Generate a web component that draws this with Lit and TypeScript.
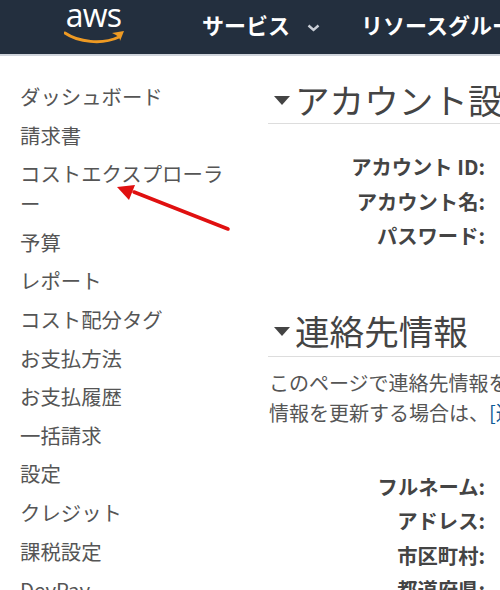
import { LitElement, html, css } from "lit";
import { customElement } from "lit/decorators.js";

const NAV = ["ダッシュボード","請求書","コストエクスプローラー","予算","レポート","コスト配分タグ","お支払方法","お支払履歴","一括請求","設定","クレジット","課税設定","DevPay"];

@customElement("app-root")
export class AppRoot extends LitElement {
  static styles = css`
    :host { display:block; width:500px; height:590px; overflow:hidden; position:relative; background:#fff;
      font-family:"Noto Sans CJK JP","Liberation Sans",sans-serif; color:#444; }
    .top { height:54px; background:#232f3e; border-bottom:2px solid #cfd4db; display:flex; align-items:flex-start; color:#fff; }
    .logo { width:59px; margin-left:64px; height:54px; position:relative; flex:none; display:flex; flex-direction:column; align-items:center; }
    .aws { font:400 32px/32px "Open Sans","Liberation Sans",sans-serif; letter-spacing:-.8px; margin-top:-1px; color:#fff; }
    .logo svg { position:absolute; left:0; top:29px; }
    .menu { font-size:22px; font-weight:700; white-space:nowrap; line-height:49px; }
    .m1 { margin-left:79px; }
    .chev { margin:24px 0 0 17px; flex:none; }
    .m2 { margin-left:41px; }
    .body { display:flex; }
    .side { width:248px; padding:25px 0 0 20px; flex:none; }
    .side div { width:210px; font-size:20.4px; line-height:30px; margin-bottom:8.6px; color:#555; word-break:break-all; }
    .main { flex:none; width:300px; margin-left:-36px; padding-left:36px; }
    .sec { width:232px; }
    h2 { margin:0; font-weight:400; font-size:34.6px; line-height:50px; white-space:nowrap; display:flex; align-items:center; border-bottom:1px solid #ddd; height:68px; box-sizing:border-box; padding-top:18px; color:#444; }
    .tri { width:0; height:0; border:8px solid transparent; border-top:9px solid #444; border-bottom:0; margin:3px 5px 0 6px; flex:none; }
    .rows { margin-top:25px; }
    .row { width:217px; text-align:right; font-weight:700; font-size:20.3px; line-height:34.5px; color:#444; white-space:nowrap; }
    h2.second { margin-top:34px; height:70px; }
    p { margin:11px 0 0 1px; font-size:20px; line-height:30px; white-space:nowrap; color:#555; }
    p a { color:#0b5a96; }
    .rows2 { margin-top:41px; }
    .arrow { position:absolute; left:110px; top:175px; }
  `;
  render() {
    return html`
      <div class="top">
        <div class="logo">
          <span class="aws">aws</span>
          <svg width="62" height="18" viewBox="0 0 62 18"><path d="M1 4 C14 13 38 16 55 8" fill="none" stroke="#ee9a23" stroke-width="3" stroke-linecap="round"/><path d="M48 4 L60 2 L56 12 Q56 7 48 4Z" fill="#ee9a23"/></svg>
        </div>
        <span class="menu m1">サービス</span>
        <svg class="chev" width="13" height="8" viewBox="0 0 13 8"><path d="M1.5 1.5 L6.5 6 L11.500 1.500" fill="none" stroke="#c9ced6" stroke-width="2.400"/></svg>
        <span class="menu m2">リソースグループ</span>
      </div>
      <div class="body">
        <nav class="side">${NAV.map((n) => html`<div>${n}</div>`)}</nav>
        <main class="main">
          <div class="sec">
            <h2><span class="tri"></span>アカウント設定</h2>
            <div class="rows">
              <div class="row">アカウント ID:</div>
              <div class="row">アカウント名:</div>
              <div class="row">パスワード:</div>
            </div>
            <h2 class="second"><span class="tri"></span>連絡先情報</h2>
            <p>このページで連絡先情報を更新<br>情報を更新する場合は、<a>[連絡先]</a></p>
            <div class="rows2">
              <div class="row">フルネーム:</div>
              <div class="row">アドレス:</div>
              <div class="row">市区町村:</div>
              <div class="row">都道府県:</div>
            </div>
          </div>
        </main>
      </div>
      <svg class="arrow" width="125" height="60" viewBox="0 0 125 60"><path d="M118 54 L24 17" stroke="#e01010" stroke-width="3.500" stroke-linecap="round"/><path d="M7 12 L25 10 L19 25Z" fill="#e01010"/></svg>
    `;
  }
}
